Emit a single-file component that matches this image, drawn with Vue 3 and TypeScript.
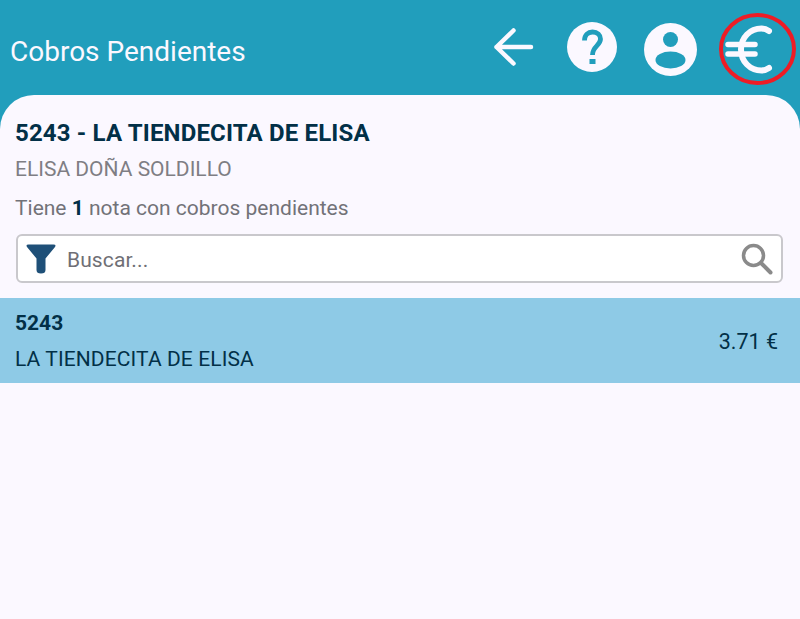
<template>
  <div class="page">
    <header class="toolbar">
      <h1 class="toolbar__title">Cobros Pendientes</h1>
      <div class="toolbar__actions">
        <button class="toolbar__btn toolbar__btn--back" aria-label="Volver">
          <svg width="40" height="38" viewBox="0 0 40 38">
            <path d="M19.500 2.500 L2.500 19 L19.500 35.500 M2.500 19 H37" fill="none" stroke="#fbf8ff" stroke-width="4.500" stroke-linecap="round" stroke-linejoin="round" />
          </svg>
        </button>
        <button class="toolbar__btn toolbar__btn--help" aria-label="Ayuda">
          <svg width="50" height="50" viewBox="0 0 50 50">
            <circle cx="25" cy="25" r="25" fill="#fbf8ff" />
            <path d="M17.500 18.500 C17.500 13 21 10 25.500 10 C30.500 10 33.500 13 33.500 17 C33.500 23.500 25.500 24 25.500 33" fill="none" stroke="#219ebc" stroke-width="4.800" />
            <rect x="22.500" y="37" width="6" height="5" fill="#219ebc" />
          </svg>
        </button>
        <button class="toolbar__btn toolbar__btn--user" aria-label="Usuario">
          <svg width="53" height="53" viewBox="0 0 53 53">
            <circle cx="26.500" cy="26.500" r="26.500" fill="#fbf8ff" />
            <circle cx="26.500" cy="16.500" r="7.500" fill="#219ebc" />
            <ellipse cx="26.500" cy="37" rx="15" ry="8.500" fill="#219ebc" />
          </svg>
        </button>
        <button class="toolbar__btn toolbar__btn--euro" aria-label="Cobros">
          <svg width="77" height="72" viewBox="0 0 77 72">
            <ellipse cx="38.500" cy="36" rx="36.500" ry="34" fill="none" stroke="#ee1c25" stroke-width="4" />
            <path d="M50 18 C47 16 45 15.500 42.500 15.500 C31 15.500 22 24.500 22 36.500 C22 48.500 31 57.500 42.500 57.500 C45 57.500 47 57 50 55" fill="none" stroke="#fbf8ff" stroke-width="6" stroke-linecap="round" />
            <path d="M9 31.500 H36 M9 41 H36" fill="none" stroke="#fbf8ff" stroke-width="5.500" stroke-linecap="round" />
          </svg>
        </button>
      </div>
    </header>

    <main class="content">
      <section class="summary">
        <h2 class="summary__name">5243 - LA TIENDECITA DE ELISA</h2>
        <p class="summary__contact">ELISA DOÑA SOLDILLO</p>
        <p class="summary__count">Tiene <b>{{ notes.length }}</b> nota con cobros pendientes</p>
      </section>

      <div class="search">
        <svg class="search__filter" width="30" height="30" viewBox="0 0 30 30">
          <path d="M2.500 0.500 H27.500 Q30.500 0.500 29 3 L19.500 14.500 V26 Q19.500 29.500 15 29.500 Q10.500 29.500 10.500 26 V14.500 L1 3 Q-0.500 0.500 2.500 0.500 Z" fill="#1f5078" />
        </svg>
        <span class="search__placeholder">Buscar...</span>
        <svg class="search__icon" width="32" height="32" viewBox="0 0 32 32">
          <circle cx="12.500" cy="12.500" r="10" fill="none" stroke="#8a8a8a" stroke-width="3.500" />
          <path d="M20 20 L29.500 29.500" fill="none" stroke="#8a8a8a" stroke-width="4" stroke-linecap="round" />
        </svg>
      </div>

      <ul class="notes">
        <li v-for="note in notes" :key="note.code" class="notes__row">
          <div>
            <div class="notes__code">{{ note.code }}</div>
            <div class="notes__client">{{ note.client }}</div>
          </div>
          <span class="notes__amount">{{ note.amount.toFixed(2) }} €</span>
        </li>
      </ul>
    </main>
  </div>
</template>

<script setup lang="ts">
interface Note {
  code: string
  client: string
  amount: number
}

const notes: Note[] = [
  { code: '5243', client: 'LA TIENDECITA DE ELISA', amount: 3.71 },
]
</script>

<style>
html,
body {
  margin: 0;
  background: #219ebc;
}
</style>

<style scoped>
.page {
  display: flex;
  flex-direction: column;
  height: 619px;
  overflow: hidden;
  background: #219ebc;
  font-family: Roboto, "Liberation Sans", sans-serif;
}

.toolbar {
  display: flex;
  flex: none;
  align-items: center;
  justify-content: space-between;
  height: 95px;
  padding: 0 4px 0 10px;
  box-sizing: border-box;
}

.toolbar__title {
  margin: 8px 0 0;
  color: #fbf8ff;
  font-size: 28px;
  font-weight: 400;
  line-height: 32px;
}

.toolbar__actions {
  display: flex;
  align-items: center;
}

.toolbar__btn {
  display: flex;
  padding: 0;
  border: 0;
  background: none;
}

.toolbar__btn--back {
  margin: 0 33px 1px 0;
}

.toolbar__btn--help {
  margin: 0 27px 1px 0;
}

.toolbar__btn--user {
  margin: 4px 22px 0 0;
}

.toolbar__btn--euro {
  margin-top: 3px;
}

.content {
  flex: 1;
  border-radius: 34px 34px 0 0;
  background: #fbf8ff;
}

.summary {
  padding: 24px 15px 0;
}

.summary__name {
  margin: 0;
  color: #023047;
  font-size: 24px;
  font-weight: 700;
  line-height: 28px;
  letter-spacing: 0.16px;
}

.summary__contact {
  margin: 8px 0 0;
  color: #7f7e84;
  font-size: 21px;
  line-height: 28px;
}

.summary__count {
  margin: 11px 0 0;
  color: #727278;
  font-size: 21px;
  line-height: 28px;
}

.summary__count b {
  color: #023047;
}

.search {
  display: flex;
  align-items: center;
  height: 49px;
  margin: 12px 17px 15px 16px;
  padding: 0 8px 0 8px;
  box-sizing: border-box;
  border: 2px solid #c9c8cc;
  border-radius: 6px;
  background: #fff;
}

.search__filter {
  flex: none;
}

.search__placeholder {
  flex: 1;
  margin: 2px 0 0 11px;
  color: #6f6f75;
  font-size: 21px;
  letter-spacing: 0.1px;
}

.notes {
  margin: 0;
  padding: 0;
  list-style: none;
}

.notes__row {
  display: flex;
  align-items: center;
  justify-content: space-between;
  height: 85px;
  padding: 0 22px 0 15px;
  box-sizing: border-box;
  background: #8ecae6;
  color: #023047;
}

.notes__code {
  font-size: 21px;
  font-weight: 700;
  line-height: 28px;
}

.notes__client {
  margin-top: 8px;
  font-size: 21px;
  line-height: 28px;
  letter-spacing: 0.1px;
}

.notes__amount {
  margin-top: 2px;
  font-size: 21.5px;
}
</style>
